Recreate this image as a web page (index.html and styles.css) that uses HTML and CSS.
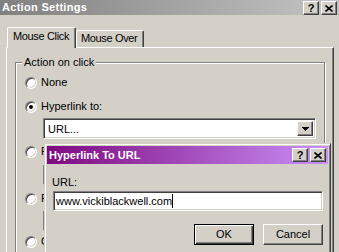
FILE: index.html
```html
<!DOCTYPE html>
<html lang="en">
<head>
    <meta charset="UTF-8">
    <title>Action Settings</title>
    <link rel="stylesheet" href="styles.css">
</head>
<body>
<div class="window">

    <div class="titlebar">
        <span class="caption">Action Settings</span>
        <div class="caption_btns">
            <span class="cbtn">?</span>
            <span class="cbtn"><svg width="8" height="7" viewBox="0 0 8 7"><path d="M0.5 0.5l7 6M7.5 0.5l-7 6" stroke="#000" stroke-width="1.6"/></svg></span>
        </div>
    </div>

    <div class="tabs">
        <div class="tab active">Mouse Click</div>
        <div class="tab">Mouse Over</div>
    </div>

    <div class="panel">
        <div class="group">
            <div class="legend">Action on click</div>
            <div class="opt first"><span class="radio"></span>None</div>
            <div class="opt"><span class="radio checked"></span>Hyperlink to:</div>
            <div class="combo">
                <span class="combo_text">URL...</span>
                <span class="drop"><svg width="7" height="4" viewBox="0 0 7 4"><path d="M0 0h7v1h-1v1h-1v1h-1v1h-1v-1h-1v-1h-1v-1h-1z"/></svg></span>
            </div>
            <div class="opt gap2"><span class="radio"></span>Run program:</div>
            <div class="field"></div>
            <div class="opt"><span class="radio"></span>Run macro:</div>
            <div class="field short"></div>
            <div class="opt tight"><span class="radio"></span>Object action:</div>
        </div>
    </div>

    <div class="dialog">
        <div class="titlebar active">
            <span class="caption">Hyperlink To URL</span>
            <div class="caption_btns">
                <span class="cbtn">?</span>
                <span class="cbtn"><svg width="8" height="7" viewBox="0 0 8 7"><path d="M0.5 0.5l7 6M7.5 0.5l-7 6" stroke="#000" stroke-width="1.6"/></svg></span>
            </div>
        </div>
        <div class="dialog_body">
            <div class="label">URL:</div>
            <div class="textbox">www.vickiblackwell.com<span class="caret"></span></div>
            <div class="buttons">
                <div class="btn default">OK</div>
                <div class="btn">Cancel</div>
            </div>
        </div>
    </div>

</div>
</body>
</html>
```

FILE: styles.css
```css
*{
    box-sizing: border-box;
}
body{
    margin:0;
    background:#d4d0c8;
    font-family:"Liberation Sans", Arial, sans-serif;
    font-size:11px;
    line-height:13px;
    color:#000;
}
.window{
    width:339px;
    height:252px;
    overflow:hidden;
    position:relative;
    background:#d4d0c8;
}

/* title bars */
.titlebar{
    height:15px;
    display:flex;
    justify-content:space-between;
    padding:0 2px;
    background:linear-gradient(to right, #808080, #c4c4c4);
    color:#fff;
    font-weight:bold;
}
.titlebar .caption{
    align-self:center;
    letter-spacing:0.3px;
}
.titlebar .caption_btns{
    display:flex;
    gap:2px;
    align-self:flex-end;
}
.titlebar.active{
    height:18px;
    background:linear-gradient(to right, #7e0a80, #c990f7);
}
.titlebar.active .caption{
    letter-spacing:0;
}
.titlebar.active .caption_btns{
    align-self:center;
}
.cbtn{
    width:16px;
    height:14px;
    display:flex;
    align-items:center;
    justify-content:center;
    background:#d4d0c8;
    border:1px solid;
    border-color:#fff #404040 #404040 #fff;
    box-shadow:inset -1px -1px #808080;
    color:#000;
    font-weight:bold;
    font-size:11px;
    letter-spacing:0;
}

/* tabs */
.tabs{
    display:flex;
    align-items:flex-end;
    height:20px;
    margin-top:12px;
    padding-left:7px;
}
.tab{
    width:68px;
    height:17px;
    padding:1px 0 0 4px;
    border:1px solid #fff;
    border-bottom:0;
    border-right-color:#404040;
    box-shadow:inset -1px 0 #808080;
    border-radius:2px 2px 0 0;
    background:#d4d0c8;
    letter-spacing:-0.35px;
}
.tab.active{
    width:69px;
    height:21px;
    margin-bottom:-1px;
    padding:2px 0 0 5px;
    position:relative;
}

.panel{
    margin-left:6px;
    width:328px;
    height:230px;
    padding:14px 8px 0 8px;
    border-top:1px solid #fff;
    border-left:1px solid #fff;
    border-right:1px solid #404040;
    box-shadow:inset -1px 0 #808080;
}

/* group box */
.group{
    height:220px;
    padding:0 8px 0 9px;
    border:1px solid #808080;
    box-shadow:inset 1px 1px #fff, 1px 1px #fff;
}
.legend{
    display:table;
    margin:-7px 0 0 -3px;
    padding:0 2px;
    background:#d4d0c8;
}
.opt{
    display:flex;
    align-items:center;
    gap:4px;
    height:21px;
    margin-top:3px;
}
.opt.gap2{
    margin-top:2px;
}
.opt.tight{
    margin-top:0;
}
.radio{
    width:12px;
    height:12px;
    border-radius:50%;
    background:#fff;
    border:1px solid;
    border-color:#808080 #fff #fff #808080;
    box-shadow:inset 1px 1px #404040, inset -1px -1px #d4d0c8;
    display:flex;
    align-items:center;
    justify-content:center;
}
.radio.checked::after{
    content:"";
    width:4px;
    height:4px;
    border-radius:50%;
    background:#000;
}
.combo{
    display:flex;
    height:21px;
    margin:1px 0 0 18px;
    padding:2px;
    background:#fff;
    border:1px solid;
    border-color:#808080 #fff #fff #808080;
    box-shadow:inset 1px 1px #404040, inset -1px -1px #d4d0c8;
}
.combo_text{
    flex:1;
    padding-left:2px;
    line-height:17px;
}
.drop{
    width:16px;
    display:flex;
    align-items:center;
    justify-content:center;
    background:#d4d0c8;
    border:1px solid;
    border-color:#fff #404040 #404040 #fff;
    box-shadow:inset -1px -1px #808080;
}
.field{
    height:20px;
    margin:3px 0 0 18px;
    width:200px;
    background:#d4d0c8;
    border:1px solid;
    border-color:#808080 #fff #fff #808080;
    box-shadow:inset 1px 1px #404040;
}
.field.short{
    margin-top:2px;
}

/* popup dialog */
.dialog{
    position:absolute;
    left:44px;
    top:143px;
    width:287px;
    height:130px;
    padding:2px;
    background:#d4d0c8;
    border:1px solid;
    border-color:#d4d0c8 #404040 #404040 #d4d0c8;
    box-shadow:inset 1px 1px #fff, inset -1px -1px #808080;
}
.dialog_body{
    padding:0 5px 0 5px;
}
.label{
    margin-top:12px;
}
.textbox{
    display:flex;
    align-items:center;
    height:20px;
    margin:2px 0 0 1px;
    padding-left:2px;
    background:#fff;
    border:1px solid;
    border-color:#808080 #fff #fff #808080;
    box-shadow:inset 1px 1px #404040, inset -1px -1px #d4d0c8;
}
.caret{
    width:1px;
    height:14px;
    background:#000;
}
.buttons{
    display:flex;
    justify-content:flex-end;
    gap:9px;
    margin-top:13px;
}
.btn{
    width:60px;
    height:21px;
    line-height:19px;
    text-align:center;
    background:#d4d0c8;
    border:1px solid;
    border-color:#fff #404040 #404040 #fff;
    box-shadow:inset -1px -1px #808080;
}
.btn.default{
    border-color:#000;
    box-shadow:inset 1px 1px #fff, inset -1px -1px #404040, inset -2px -2px #808080;
}
```
